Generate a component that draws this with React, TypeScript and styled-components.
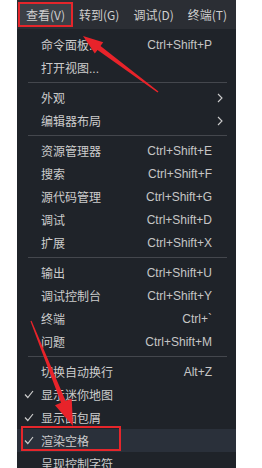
import React from 'react';
import styled, { createGlobalStyle } from 'styled-components';

const GlobalStyle = createGlobalStyle`
  html, body {
    margin: 0;
    padding: 0;
    background: #ffffff;
  }
  body {
    font-family: "Liberation Sans", "Noto Sans CJK SC", sans-serif;
  }
`;

const Page = styled.div`
  position: relative;
  width: 262px;
  height: 468px;
  overflow: hidden;
  padding-left: 17px;
  box-sizing: border-box;
`;

const Panel = styled.div`
  width: 219px;
  height: 468px;
  background: #1f2329;
  color: #cccccc;
  font-size: 12px;
  overflow: hidden;
`;

const MenuBar = styled.div`
  display: flex;
  align-items: center;
  gap: 2px;
  height: 29px;
  padding-left: 3px;
  background: #2b2e34;
  white-space: nowrap;
  overflow: hidden;
  font-family: "Noto Sans CJK SC", "Liberation Sans", sans-serif;
`;

const MenuBarItem = styled.div<{ $active?: boolean; $marked?: boolean }>`
  display: flex;
  align-items: center;
  flex-shrink: 0;
  height: 21px;
  padding: 0 6px;
  color: #cfcfcf;
  background: ${(p) => (p.$active ? '#3c4046' : 'transparent')};
  outline: ${(p) => (p.$marked ? '2px solid #e5262b' : 'none')};
`;

const Menu = styled.div`
  display: flex;
  flex-direction: column;
  padding-top: 4px;
`;

const Row = styled.div<{ $hover?: boolean }>`
  position: relative;
  display: grid;
  grid-template-columns: 24px 1fr auto 24px;
  align-items: center;
  height: 23px;
  background: ${(p) => (p.$hover ? '#2a303a' : 'transparent')};
`;

const Check = styled.span`
  display: flex;
  justify-content: center;
  align-items: center;
`;

const Label = styled.span`
  white-space: nowrap;
`;

const Shortcut = styled.span`
  white-space: nowrap;
  color: #c6c6c6;
`;

const Chevron = styled.span`
  display: flex;
  align-items: center;
  padding-left: 5px;
`;

const Separator = styled.div`
  height: 1px;
  margin: 3px 9px 3px 11px;
  background: #44474d;
`;

const Callout = styled.span`
  position: absolute;
  left: 4px;
  top: -3px;
  width: 100px;
  height: 25px;
  box-sizing: border-box;
  border: 2px solid #e5262b;
  pointer-events: none;
`;

const Overlay = styled.svg`
  position: absolute;
  left: 0;
  top: 0;
  pointer-events: none;
`;

type Item =
  | { sep: true }
  | { sep?: false; label: string; key?: string; checked?: boolean; submenu?: boolean; hover?: boolean; marked?: boolean };

const items: Item[] = [
  { label: '命令面板...', key: 'Ctrl+Shift+P' },
  { label: '打开视图...' },
  { sep: true },
  { label: '外观', submenu: true },
  { label: '编辑器布局', submenu: true },
  { sep: true },
  { label: '资源管理器', key: 'Ctrl+Shift+E' },
  { label: '搜索', key: 'Ctrl+Shift+F' },
  { label: '源代码管理', key: 'Ctrl+Shift+G' },
  { label: '调试', key: 'Ctrl+Shift+D' },
  { label: '扩展', key: 'Ctrl+Shift+X' },
  { sep: true },
  { label: '输出', key: 'Ctrl+Shift+U' },
  { label: '调试控制台', key: 'Ctrl+Shift+Y' },
  { label: '终端', key: 'Ctrl+`' },
  { label: '问题', key: 'Ctrl+Shift+M' },
  { sep: true },
  { label: '切换自动换行', key: 'Alt+Z' },
  { label: '显示迷你地图', checked: true },
  { label: '显示面包屑', checked: true },
  { label: '渲染空格', checked: true, hover: true, marked: true },
  { label: '呈现控制字符' },
];

const CheckIcon = () => (
  <svg width="10" height="9" viewBox="0 0 10 9">
    <polyline points="1,4.5 3.8,7.5 9,1" fill="none" stroke="#cccccc" strokeWidth="1.2" />
  </svg>
);

const ChevronIcon = () => (
  <svg width="6" height="10" viewBox="0 0 6 10">
    <polyline points="1,1 5,5 1,9" fill="none" stroke="#cccccc" strokeWidth="1.1" />
  </svg>
);

type Pt = [number, number];

// tapered annotation arrow as one polygon
function arrowPoints(tail: Pt, tip: Pt, headLen: number, headW: number, tailW: number, neckW: number): string {
  const dx = tip[0] - tail[0];
  const dy = tip[1] - tail[1];
  const len = Math.hypot(dx, dy);
  const ux = dx / len;
  const uy = dy / len;
  const nx = -uy;
  const ny = ux;
  const neck: Pt = [tip[0] - ux * headLen, tip[1] - uy * headLen];
  const pts: Pt[] = [
    [tail[0] + (nx * tailW) / 2, tail[1] + (ny * tailW) / 2],
    [neck[0] + (nx * neckW) / 2, neck[1] + (ny * neckW) / 2],
    [neck[0] + (nx * headW) / 2, neck[1] + (ny * headW) / 2],
    tip,
    [neck[0] - (nx * headW) / 2, neck[1] - (ny * headW) / 2],
    [neck[0] - (nx * neckW) / 2, neck[1] - (ny * neckW) / 2],
    [tail[0] - (nx * tailW) / 2, tail[1] - (ny * tailW) / 2],
  ];
  return pts.map((p) => p.join(',')).join(' ');
}

const menuBar = ['查看(V)', '转到(G)', '调试(D)', '终端(T)', '帮助(H)'];

export default function App() {
  return (
    <Page>
      <GlobalStyle />
      <Panel>
        <MenuBar>
          {menuBar.map((m, i) => (
            <MenuBarItem key={m} $active={i === 0} $marked={i === 0}>
              {m}
            </MenuBarItem>
          ))}
        </MenuBar>
        <Menu>
          {items.map((it, i) =>
            it.sep ? (
              <Separator key={i} />
            ) : (
              <Row key={i} $hover={it.hover}>
                <Check>{it.checked && <CheckIcon />}</Check>
                <Label>{it.label}</Label>
                <Shortcut>{it.key}</Shortcut>
                <Chevron>{it.submenu && <ChevronIcon />}</Chevron>
                {it.marked && <Callout />}
              </Row>
            )
          )}
        </Menu>
      </Panel>
      <Overlay width="262" height="468" viewBox="0 0 262 468">
        <polygon points={arrowPoints([158, 92], [83, 36], 20, 14, 1.5, 5)} fill="#e8232a" />
        <polygon points={arrowPoints([31, 321], [73, 426], 26, 18, 1.2, 5)} fill="#e8232a" />
      </Overlay>
    </Page>
  );
}
